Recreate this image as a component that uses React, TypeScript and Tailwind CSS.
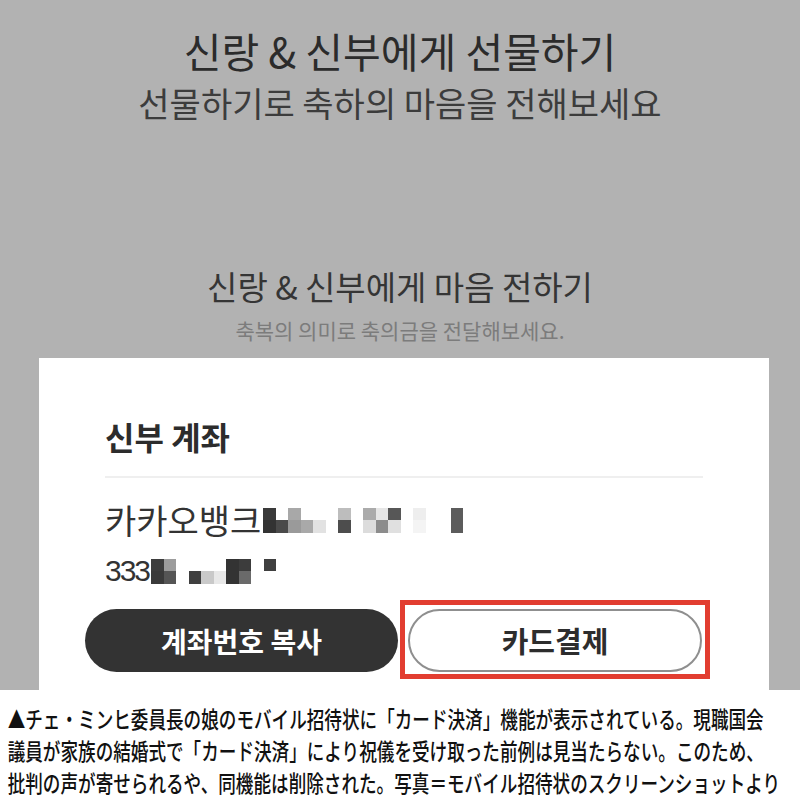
const nameBlocks: string[][] = [
  ["#3a3a3a", "#333333"],
  ["transparent", "#4a4a4a"],
  ["#a8a8a8", "#9a9a9a"],
  ["transparent", "#a9a9a9"],
  ["transparent", "#e2e2e2"],
  ["transparent", "transparent"],
  ["#bdbdbd", "#4d4d4d"],
  ["transparent", "transparent"],
  ["#ababab", "#dcdcdc"],
  ["#e6e6e6", "#8c8c8c"],
  ["#575757", "#e0e0e0"],
  ["transparent", "transparent"],
  ["#eeeeee", "#f4f4f4"],
  ["transparent", "transparent"],
  ["transparent", "transparent"],
  ["#5c5c5c", "#5c5c5c"],
];

const numberBlocks: string[][] = [
  ["#3d3d3d", "#3a3a3a"],
  ["#9c9c9c", "#555555"],
  ["transparent", "transparent"],
  ["transparent", "#3f3f3f"],
  ["transparent", "#c9c9c9"],
  ["transparent", "#e8e8e8"],
  ["#333333", "#333333"],
  ["#3c3c3c", "#6a6a6a"],
  ["transparent", "transparent"],
  ["#3f3f3f", "transparent"],
];

function Mosaic({ cols }: { cols: string[][] }) {
  return (
    <span className="inline-flex ml-[2px] align-middle">
      {cols.map((c, i) => (
        <span key={i} className="flex flex-col">
          {c.map((color, j) => (
            <span key={j} className="block w-[12.5px] h-[12.5px]" style={{ backgroundColor: color }} />
          ))}
        </span>
      ))}
    </span>
  );
}

export default function App() {
  return (
    <div className="w-[800px] h-[800px] overflow-hidden bg-white font-['Noto_Sans_CJK_KR',sans-serif]">
      {/* screenshot area */}
      <div className="h-[690px] overflow-hidden bg-[#b2b2b2] flex flex-col items-center">
        <h1 className="mt-[24px] text-[41px] leading-[52px] text-[#2b2b2b]">
          신랑 &amp; 신부에게 선물하기
        </h1>
        <p className="mt-[2px] text-[34px] leading-[50px] text-[#3c3c3c]">
          선물하기로 축하의 마음을 전해보세요
        </p>

        <h2 className="mt-[136px] text-[33px] leading-[44px] text-[#353535]">
          신랑 &amp; 신부에게 마음 전하기
        </h2>
        <p className="mt-[8px] text-[21px] leading-[28px] text-[#7c7c7c]">
          축복의 의미로 축의금을 전달해보세요.
        </p>

        <div className="mt-[14px] w-[730px] ml-[8px] flex-1 bg-white px-[46px] pt-[58px]">
          <div className="px-[20px]">
            <div className="text-[32px] leading-[40px] font-bold text-[#2c2c2c]">신부 계좌</div>
            <div className="mt-[20px] h-[2px] bg-[#efefef]" />
            <div className="mt-[19px] flex items-center text-[34px] leading-[46px] text-[#333]">
              카카오뱅크
              <Mosaic cols={nameBlocks} />
            </div>
            <div className="mt-[5px] flex items-center text-[30px] leading-[46px] text-[#333] tracking-[-2px] font-['Liberation_Sans',sans-serif]">
              333
              <Mosaic cols={numberBlocks} />
            </div>
          </div>

          <div className="mt-[15px] flex gap-[10px]">
            <button className="w-[313px] h-[63px] rounded-full bg-[#333333] text-white text-[28px] font-bold">
              계좌번호 복사
            </button>
            <div className="relative">
              <button className="w-[294px] h-[63px] rounded-full bg-white border-2 border-[#8f8f8f] text-[#2d2d2d] text-[29px] font-bold">
                카드결제
              </button>
              <div className="absolute left-[-8px] right-[-8px] top-[-9px] bottom-[-7px] border-[5px] border-[#e23d30]" />
            </div>
          </div>
        </div>
      </div>

      {/* caption */}
      <div className="pt-[12px] pl-[10px] whitespace-nowrap font-['Noto_Sans_CJK_JP',sans-serif] text-[23px] leading-[32px] font-medium text-[#111] origin-left scale-x-[0.765]">
        <div>▲チェ・ミンヒ委員長の娘のモバイル招待状に「カード決済」機能が表示されている。現職国会</div>
        <div>議員が家族の結婚式で「カード決済」により祝儀を受け取った前例は見当たらない。このため、</div>
        <div>批判の声が寄せられるや、同機能は削除された。写真＝モバイル招待状のスクリーンショットより</div>
      </div>
    </div>
  );
}
